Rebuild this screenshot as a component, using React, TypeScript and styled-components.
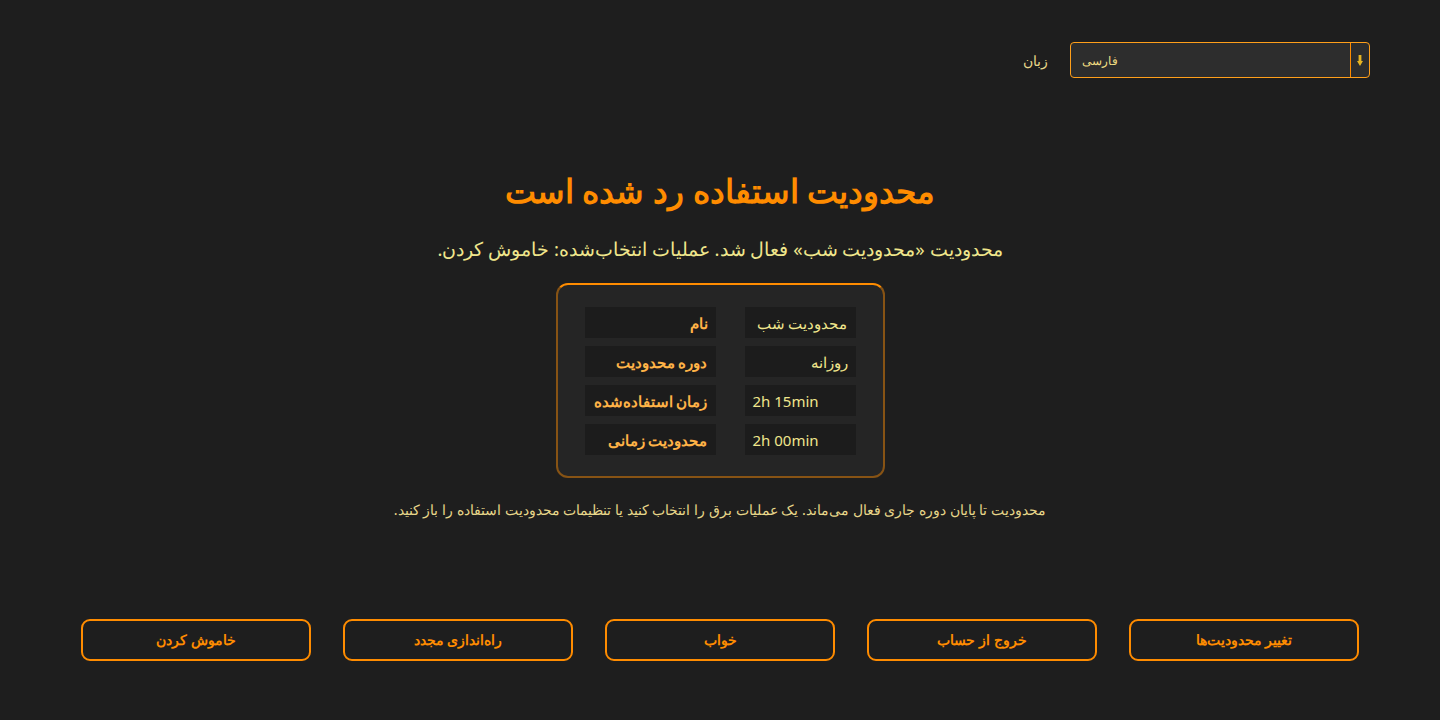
import React from "react";
import styled, { createGlobalStyle } from "styled-components";

const GlobalStyle = createGlobalStyle`
    html, body {
        margin: 0;
        padding: 0;
        background: #1e1e1e;
    }
    body {
        font-family: "Noto Sans", sans-serif;
    }
`;

const Page = styled.div`
    direction: rtl;
    height: 720px;
    display: flex;
    flex-direction: column;
    box-sizing: border-box;
`;

// Language bar
const TopBar = styled.div`
    display: flex;
    align-items: center;
    gap: 22px;
    padding: 42px 70px 0;
`;

const LangLabel = styled.label`
    color: #e8d78a;
    font-size: 14px;
`;

const Select = styled.div`
    direction: ltr;
    width: 300px;
    height: 36px;
    box-sizing: border-box;
    border: 1px solid #ff9f1a;
    border-radius: 4px;
    background: #2d2d2d;
    display: flex;
    align-items: stretch;
`;

const SelectValue = styled.span`
    flex: 1;
    display: flex;
    align-items: center;
    padding-left: 11px;
    color: #f0dc82;
    font-size: 12px;
`;

const SelectArrow = styled.span`
    width: 18px;
    border-left: 1px solid #ff8c00;
    display: flex;
    align-items: center;
    justify-content: center;
`;

// Main message
const Main = styled.main`
    flex: 1;
    display: flex;
    flex-direction: column;
    align-items: center;
    padding-top: 93px;
`;

const Title = styled.h1`
    margin: 0;
    color: #ff8c00;
    font-size: 33px;
    font-weight: bold;
    line-height: 40px;
`;

const Message = styled.p`
    margin: 25px 0 0;
    color: #f0e68c;
    font-size: 18.5px;
    line-height: 26px;
`;

const Card = styled.div`
    margin-top: 21px;
    background: #252525;
    border: 2px solid rgba(255, 140, 0, 0.45);
    border-top-color: #ff8c00;
    border-radius: 12px;
    padding: 22px 27px 21px;
`;

const InfoGrid = styled.div`
    display: grid;
    grid-template-columns: 111px 131px;
    column-gap: 29px;
    row-gap: 8px;
`;

const Cell = styled.div<{ $head?: boolean }>`
    height: 31px;
    box-sizing: border-box;
    background: #1c1c1c;
    padding: 0 8px;
    display: flex;
    align-items: center;
    white-space: nowrap;
    font-size: 15px;
    font-weight: ${({ $head }) => ($head ? "bold" : "normal")};
    color: ${({ $head }) => ($head ? "#ffb347" : "#f0e68c")};
`;

const Note = styled.p`
    margin: 22px 0 0;
    color: #e8d78a;
    font-size: 14.3px;
    line-height: 20px;
`;

// Actions
const Actions = styled.div`
    display: flex;
    gap: 32px;
    padding: 0 81px 59px;
`;

const ActionButton = styled.button`
    flex: 1;
    height: 42px;
    background: transparent;
    border: 2px solid #ff8c00;
    border-radius: 9px;
    color: #ff8c00;
    font-family: "Noto Sans", sans-serif;
    font-size: 13.5px;
    font-weight: bold;
    cursor: pointer;
`;

const rows = [
    { label: "نام", value: "محدودیت شب" },
    { label: "دوره محدودیت", value: "روزانه" },
    { label: "زمان استفاده‌شده", value: "2h 15min" },
    { label: "محدودیت زمانی", value: "2h 00min" },
];

const actions = ["تغییر محدودیت‌ها", "خروج از حساب", "خواب", "راه‌اندازی مجدد", "خاموش کردن"];

export default function App() {
    return (
        <>
            <GlobalStyle />
            <Page>
                <TopBar>
                    <Select>
                        <SelectValue>فارسی</SelectValue>
                        <SelectArrow>
                            <svg width="8" height="13" viewBox="0 0 8 13">
                                <path d="M2.6 1h2.8v6H7L4 12 1 7h1.6z" fill="#e6b422" />
                            </svg>
                        </SelectArrow>
                    </Select>
                    <LangLabel>زبان</LangLabel>
                </TopBar>
                <Main>
                    <Title>محدودیت استفاده رد شده است</Title>
                    <Message>محدودیت «محدودیت شب» فعال شد. عملیات انتخاب‌شده: خاموش کردن.</Message>
                    <Card>
                        <InfoGrid>
                            {rows.map((r) => (
                                <React.Fragment key={r.label}>
                                    <Cell dir="auto">{r.value}</Cell>
                                    <Cell $head>{r.label}</Cell>
                                </React.Fragment>
                            ))}
                        </InfoGrid>
                    </Card>
                    <Note>
                        محدودیت تا پایان دوره جاری فعال می‌ماند. یک عملیات برق را انتخاب کنید یا تنظیمات محدودیت استفاده را باز کنید.
                    </Note>
                </Main>
                <Actions>
                    {actions.map((a) => (
                        <ActionButton key={a}>{a}</ActionButton>
                    ))}
                </Actions>
            </Page>
        </>
    );
}
